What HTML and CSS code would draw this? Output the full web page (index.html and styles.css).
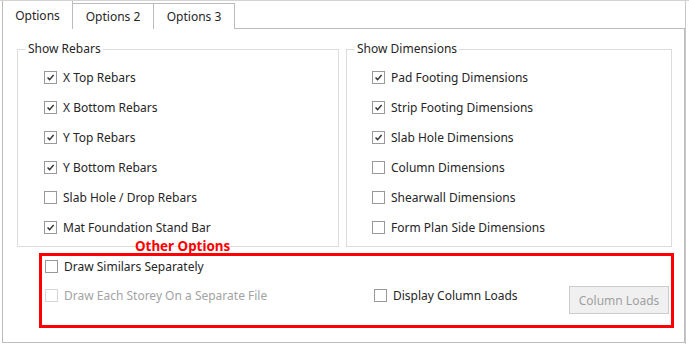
FILE: index.html
```html
<!DOCTYPE html>
<html lang="en">
<head>
    <meta charset="UTF-8">
    <meta name="viewport" content="width=device-width, initial-scale=1.0">
    <title>Drawing Options</title>
    <link rel="stylesheet" href="styles.css">
</head>
<body>
    <div class="window">
        <div class="tab-strip">
            <div class="tab active">Options</div>
            <div class="tab">Options 2</div>
            <div class="tab">Options 3</div>
        </div>

        <div class="panel">
            <div class="groups">
                <div class="group group-left">
                    <div class="group-title">Show Rebars</div>
                    <div class="check-list">
                        <label class="check"><span class="box checked"><svg viewBox="0 0 13 13"><path d="M3 6.6 L5.4 9 L10.2 3.6"/></svg></span>X Top Rebars</label>
                        <label class="check"><span class="box checked"><svg viewBox="0 0 13 13"><path d="M3 6.6 L5.4 9 L10.2 3.6"/></svg></span>X Bottom Rebars</label>
                        <label class="check"><span class="box checked"><svg viewBox="0 0 13 13"><path d="M3 6.6 L5.4 9 L10.2 3.6"/></svg></span>Y Top Rebars</label>
                        <label class="check"><span class="box checked"><svg viewBox="0 0 13 13"><path d="M3 6.6 L5.4 9 L10.2 3.6"/></svg></span>Y Bottom Rebars</label>
                        <label class="check"><span class="box"></span>Slab Hole / Drop Rebars</label>
                        <label class="check"><span class="box checked"><svg viewBox="0 0 13 13"><path d="M3 6.6 L5.4 9 L10.2 3.6"/></svg></span>Mat Foundation Stand Bar</label>
                    </div>
                </div>

                <div class="group group-right">
                    <div class="group-title">Show Dimensions</div>
                    <div class="check-list">
                        <label class="check"><span class="box checked"><svg viewBox="0 0 13 13"><path d="M3 6.6 L5.4 9 L10.2 3.6"/></svg></span>Pad Footing Dimensions</label>
                        <label class="check"><span class="box checked"><svg viewBox="0 0 13 13"><path d="M3 6.6 L5.4 9 L10.2 3.6"/></svg></span>Strip Footing Dimensions</label>
                        <label class="check"><span class="box checked"><svg viewBox="0 0 13 13"><path d="M3 6.6 L5.4 9 L10.2 3.6"/></svg></span>Slab Hole Dimensions</label>
                        <label class="check"><span class="box"></span>Column Dimensions</label>
                        <label class="check"><span class="box"></span>Shearwall Dimensions</label>
                        <label class="check"><span class="box"></span>Form Plan Side Dimensions</label>
                    </div>
                </div>
            </div>

            <div class="other-title">Other Options</div>

            <div class="other-box">
                <div class="other-row">
                    <label class="check"><span class="box"></span>Draw Similars Separately</label>
                </div>
                <div class="other-row second">
                    <label class="check disabled"><span class="box"></span>Draw Each Storey On a Separate File</label>
                    <label class="check"><span class="box"></span>Display Column Loads</label>
                    <button class="btn" disabled>Column Loads</button>
                </div>
            </div>
        </div>
    </div>
</body>
</html>
```

FILE: styles.css
```css
* {
    margin: 0;
    padding: 0;
    box-sizing: border-box;
}

body {
    font-family: "Noto Sans", Arial, sans-serif;
    font-size: 12px;
    color: #262626;
    background-color: #fff;
    border-top: 1px solid #d2d2d2;
}

.window {
    width: 686px;
    margin-top: -1px;
    border-right: 1px solid #c8c8c8;
    padding-left: 2px;
    height: 344px;
}

/* tabs */
.tab-strip {
    display: flex;
    align-items: flex-end;
    height: 29px;
    position: relative;
    z-index: 1;
}

.tab {
    height: 26px;
    width: 81px;
    border: 1px solid #bcbcbc;
    border-bottom: none;
    border-left: none;
    background-color: #fff;
    text-align: center;
    line-height: 25px;
}

.tab.active {
    height: 29px;
    width: 71px;
    border-left: 1px solid #bcbcbc;
    line-height: 30px;
}

.panel {
    margin-top: -1px;
    border: 1px solid #bcbcbc;
    height: 315px;
    padding: 12px 12px 0 14px;
}

/* group boxes */
.groups {
    display: flex;
    gap: 7px;
}

.group {
    margin-top: 8px;
    border: 1px solid #dcdcdc;
    padding-bottom: 4px;
}

.group-left {
    width: 323px;
}

.group-right {
    width: 327px;
}

.group-title {
    width: fit-content;
    margin: -9px 0 0 8px;
    padding: 0 2px;
    line-height: 16px;
    background-color: #fff;
}

.check-list {
    padding: 5px 0 0 26px;
}

.group-right .check-list {
    padding-left: 25px;
}

.check {
    display: flex;
    align-items: center;
    height: 30px;
    gap: 6px;
}

.box {
    width: 13px;
    height: 13px;
    border: 1px solid #999;
    background-color: #fff;
    flex-shrink: 0;
}

.box svg {
    display: block;
    width: 11px;
    height: 11px;
    fill: none;
    stroke: #333;
    stroke-width: 1.7;
}

.check.disabled {
    color: #a3a3a3;
}

.check.disabled .box {
    border-color: #d6d6d6;
}

/* other options */
.other-title {
    margin: -9px 0 0 118px;
    color: #f00;
    font-weight: bold;
    font-size: 13.4px;
    line-height: 16px;
    position: relative;
}

.other-box {
    margin: -1px 0 0 22px;
    width: 635px;
    height: 75px;
    border: 3px solid #f00;
    padding: 0 2px 0 3px;
}

.other-row .check {
    height: 20px;
}

.other-row.second {
    display: grid;
    grid-template-columns: 329px 1fr auto;
    align-items: start;
    margin-top: 10px;
}

.other-row.second .check {
    height: 18px;
}

.btn {
    width: 100px;
    height: 28px;
    font-family: inherit;
    font-size: 12px;
    color: #a0a0a0;
    background-color: #f0f0f0;
    border: 1px solid #cccccc;
}
```
